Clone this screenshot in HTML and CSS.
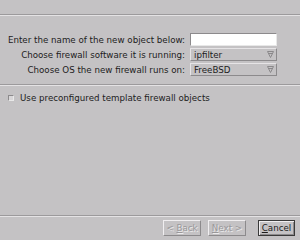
FILE: index.html
```html
<!DOCTYPE html>
<html lang="en">
<head>
    <meta charset="UTF-8">
    <title>New Firewall</title>
    <link rel="stylesheet" href="styles.css">
</head>
<body>
    <div class="wizard">
        <div class="rule rule-top"></div>

        <div class="fields">
            <label class="field-label" for="objName">Enter the name of the new object below:</label>
            <input type="text" id="objName" class="text-input">

            <span class="field-label">Choose firewall software it is running:</span>
            <div class="combo">
                <span class="combo-text">ipfilter</span>
                <span class="combo-arrow">
                    <svg width="7" height="7" viewBox="0 0 7 7"><path d="M0.5 0.5 H6.5 L3.5 6.5 Z" fill="none" stroke="#8a888a" stroke-width="1"/><path d="M1.5 2.5 H5.5" stroke="#8a888a"/></svg>
                </span>
            </div>

            <span class="field-label">Choose OS the new firewall runs on:</span>
            <div class="combo">
                <span class="combo-text">FreeBSD</span>
                <span class="combo-arrow">
                    <svg width="7" height="7" viewBox="0 0 7 7"><path d="M0.5 0.5 H6.5 L3.5 6.5 Z" fill="none" stroke="#8a888a" stroke-width="1"/><path d="M1.5 2.5 H5.5" stroke="#8a888a"/></svg>
                </span>
            </div>
        </div>

        <div class="rule rule-mid"></div>

        <label class="option">
            <span class="check"></span>
            Use preconfigured template firewall objects
        </label>

        <div class="spacer"></div>

        <div class="rule"></div>

        <div class="buttons">
            <button class="btn btn-back" disabled>&lt; <u>B</u>ack</button>
            <button class="btn btn-next" disabled><u>N</u>ext &gt;</button>
            <button class="btn btn-cancel"><u>C</u>ancel</button>
        </div>
    </div>
</body>
</html>
```

FILE: styles.css
```css
* {
    box-sizing: border-box;
}

body {
    margin: 0;
    background-color: #c4c2c4;
    font-family: 'DejaVu Sans', 'Liberation Sans', sans-serif;
    font-size: 8.7px;
    color: #1c1c1c;
}

.wizard {
    height: 240px;
    display: flex;
    flex-direction: column;
}

.rule {
    height: 2px;
    border-top: 1px solid #9c9a9c;
    border-bottom: 1px solid #e4e2e4;
}

.rule-top {
    margin-top: 14px;
}

.fields {
    display: grid;
    grid-template-columns: 182px 87px;
    grid-auto-rows: 13px;
    column-gap: 5px;
    row-gap: 2px;
    padding: 17px 0 0 3px;
    align-items: center;
}

.field-label {
    text-align: right;
    white-space: nowrap;
}

.text-input {
    height: 13px;
    width: 87px;
    margin: 0;
    background: #fff;
    border: 1px solid #e8e8e8;
    border-top-color: #8c8a8c;
    border-left-color: #8c8a8c;
}

.combo {
    height: 13px;
    display: flex;
    align-items: center;
    justify-content: space-between;
    border: 1px solid #e6e4e6;
    border-right-color: #8c8a8c;
    border-bottom-color: #8c8a8c;
    padding: 0 2px 0 3px;
}

.combo-arrow {
    display: flex;
}

.rule-mid {
    margin-top: 8px;
}

.option {
    display: flex;
    align-items: center;
    gap: 6px;
    padding: 7px 0 0 8px;
}

.check {
    width: 6px;
    height: 6px;
    background: #d8d6d8;
    border: 1px solid #e8e8e8;
    border-top-color: #8c8a8c;
    border-left-color: #8c8a8c;
}

.spacer {
    flex: 1;
}

.buttons {
    display: flex;
    justify-content: flex-end;
    padding: 3px 5px 4px 0;
}

.btn {
    height: 16px;
    padding: 0;
    font-family: inherit;
    font-size: 8.7px;
    background: #c4c2c4;
    color: #1c1c1c;
    border: 1px solid #8c8a8c;
    border-top-color: #f0eef0;
    border-left-color: #f0eef0;
}

.btn u {
    text-decoration-thickness: 1px;
}

.btn[disabled] {
    color: #9a989a;
    text-shadow: 1px 1px 0 #ecebec;
}

.btn-back {
    width: 38px;
}

.btn-next {
    width: 38px;
    margin-left: 7px;
}

.btn-cancel {
    width: 37px;
    margin-left: 12px;
    border: 1px solid #3a3a3a;
    box-shadow: inset 1px 1px 0 #f0eef0, inset -1px -1px 0 #8c8a8c;
}
```
